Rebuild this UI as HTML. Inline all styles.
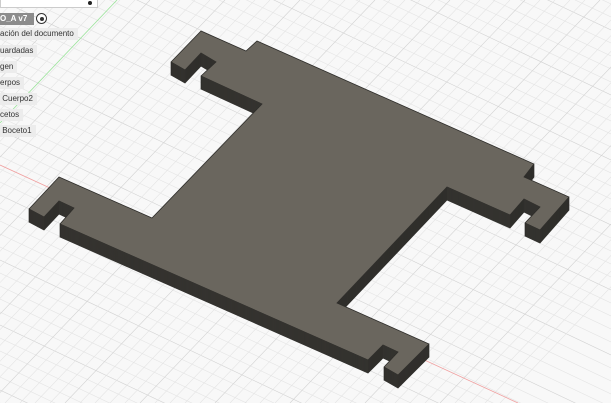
<!DOCTYPE html><html style="overflow:hidden;height:403px;width:611px"><head><style>
body{margin:0;width:611px;height:403px;overflow:hidden;background:#f8f8f8;font-family:"Liberation Sans",sans-serif;position:relative}
svg{position:absolute;left:0;top:0}
.it{position:absolute;left:0;height:12px;background:#ececec;font-size:8px;line-height:12px;color:#333;padding:0 4px 0 0;white-space:nowrap}
</style></head><body>
<svg width="611" height="403">
<defs>
<polygon id="p" points="201,31 246,51 257,41 534,164 524,177 569,197 540,230 525,223 540,207 524,199 510,215 447,187 337,303 429,344 398,375 384,367 398,352 383,345 368,360 60,224 74,208 59,201 44,217 29,209 59,177 152,218 262,104 201,76 216,62 201,53 185,70 171,62"/>
</defs>
<g stroke="#dcdcdc" stroke-width="0.6" id="grid"></g>
<line x1="117" y1="0" x2="0" y2="123" stroke="#9be39b" stroke-width="0.8"/>
<line x1="0" y1="165" x2="518" y2="403" stroke="#f0a0a0" stroke-width="0.8"/>
<g fill="#55524b" stroke="#2e2d2a" stroke-width="0.8">
<use href="#p" y="13"/><use href="#p" y="12"/><use href="#p" y="11"/><use href="#p" y="10"/><use href="#p" y="9"/><use href="#p" y="8"/><use href="#p" y="7"/><use href="#p" y="6"/><use href="#p" y="5"/><use href="#p" y="4"/><use href="#p" y="3"/><use href="#p" y="2"/><use href="#p" y="1"/>
</g>
<use href="#p" fill="#6a665e" stroke="#2e2d2a" stroke-width="0.8"/>
</svg>
<script>
var g=document.getElementById('grid'),s='';
for(var i=-40;i<40;i++){var b=i*13;s+='<line x1="0" y1="'+b+'" x2="611" y2="'+(b+290)+'" stroke="'+(i%5==0?'#d2d2d2':'#e4e4e4')+'"/>';}
for(var i=-40;i<60;i++){var a=i*15;s+='<line x1="'+a+'" y1="0" x2="'+(a-385)+'" y2="403" stroke="'+(i%5==0?'#d2d2d2':'#e4e4e4')+'"/>';}
g.innerHTML=s;
</script>
<div style="position:absolute;left:0;top:0;width:96px;height:7px;background:#fff;border:1px solid #ccc;border-top:0"></div>
<div style="position:absolute;left:88px;top:1px;width:4px;height:4px;border-radius:50%;background:#222"></div>
<div class="it" style="top:13px;background:#8c8c8c;color:#fff;font-weight:bold;width:30px">O_A v7</div>
<div style="position:absolute;left:36px;top:13px;width:9px;height:9px;border:1px solid #333;border-radius:50%;background:#fff"><div style="margin:2.5px;width:4px;height:4px;border-radius:50%;background:#333"></div></div>
<div class="it" style="top:28px">ación del documento</div>
<div class="it" style="top:45px">uardadas</div>
<div class="it" style="top:61px">gen</div>
<div class="it" style="top:77px">erpos</div>
<div class="it" style="top:93px">&nbsp;Cuerpo2</div>
<div class="it" style="top:109px">cetos</div>
<div class="it" style="top:125px">&nbsp;Boceto1</div>
</body></html>
